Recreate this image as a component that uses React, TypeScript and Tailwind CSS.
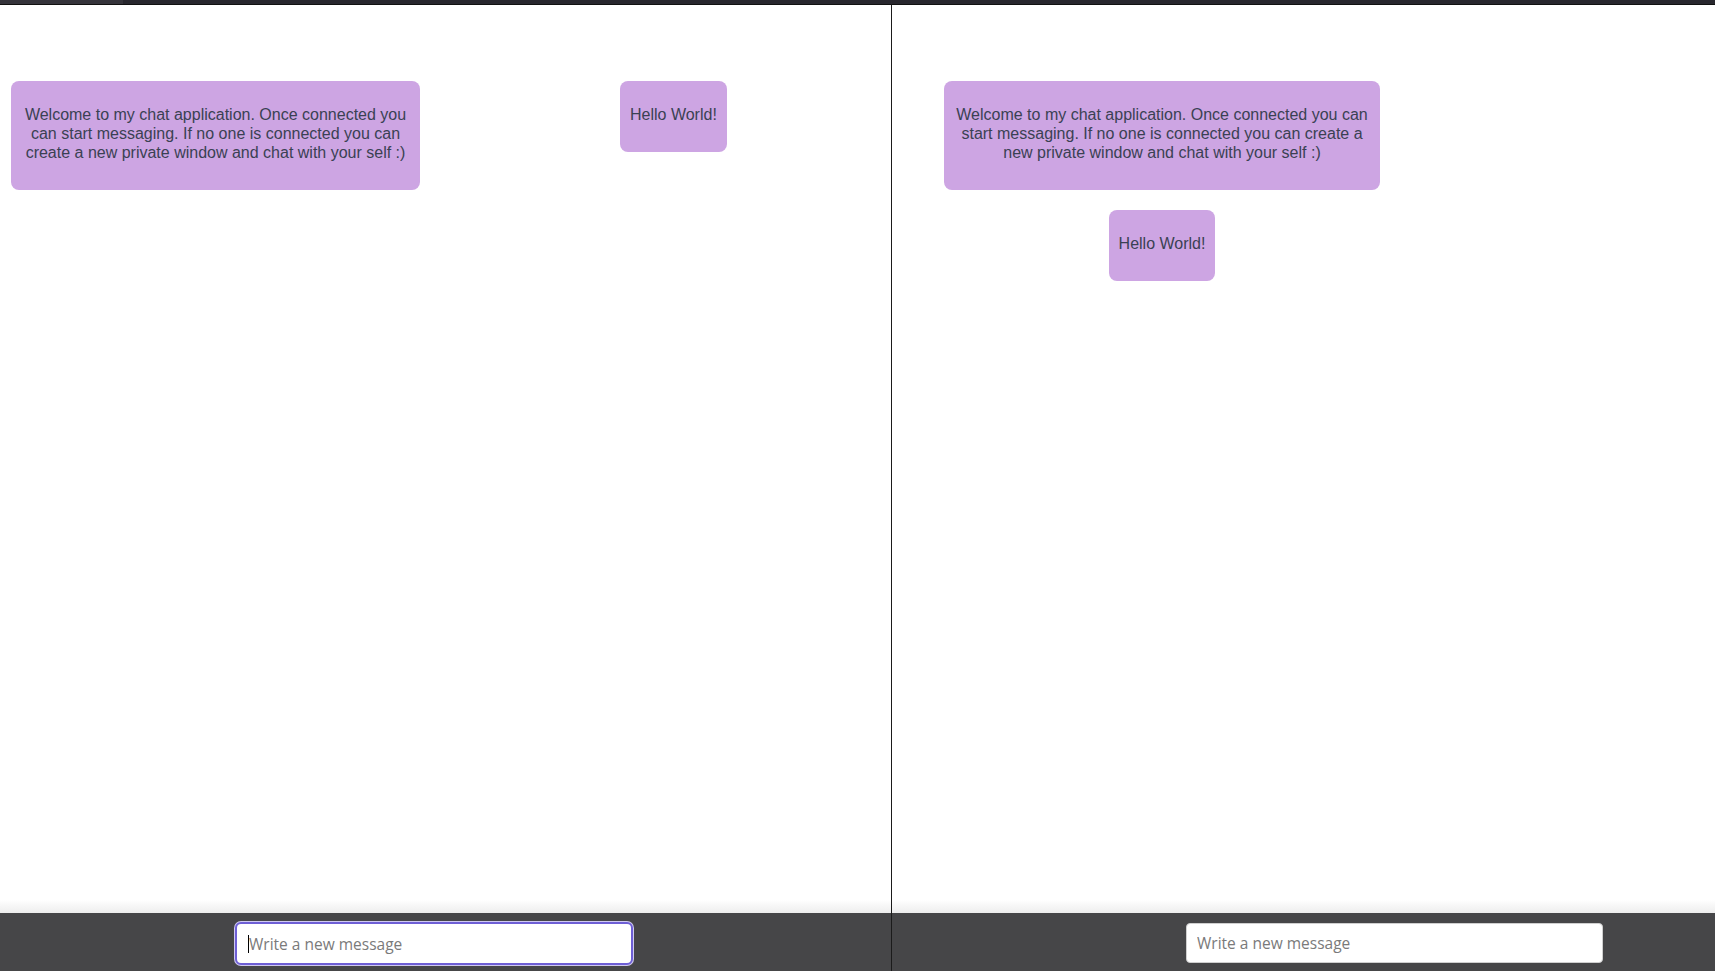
// ** React
import React from "react";

type TBubble = {
    text: string
    className?: string
}

const Bubble = ({text, className}: TBubble) => {
    return (
        <div
            className={`bg-[#cda5e3] text-[#3a4153] rounded-[8px] pt-[24px] pb-[28px] text-center text-[16px] leading-[19px] ${className ?? ''}`}
            style={{fontFamily: '"Liberation Sans", Arial, sans-serif'}}
        >
            {text}
        </div>
    )
}

type TFooter = {
    focused?: boolean
    offset: string
}

const Footer = ({focused, offset}: TFooter) => {
    return (
        <div className="flex flex-col">
            {/* Soft shade above the bar */}
            <div className="h-[13px] bg-gradient-to-b from-white to-[#ededed]"/>
            <div className={`h-[58px] bg-[#464648] flex items-start ${offset}`}>
                {focused ? (
                    <div className="relative mt-[9px]">
                        <input
                            readOnly
                            placeholder="Write a new message"
                            className="w-[398px] h-[43px] bg-white rounded-[6px] border-2 border-[#6e5fd5] shadow-[0_0_0_1px_#cfc9f0] pl-[12px] text-[15.5px] text-[#555] placeholder:text-[#7a7a7a] outline-none"
                            style={{fontFamily: '"Open Sans", "Noto Sans", sans-serif'}}
                        />
                        {/* Caret */}
                        <span className="absolute left-[13px] top-[13px] w-px h-[18px] bg-black"/>
                    </div>
                ) : (
                    <input
                        readOnly
                        placeholder="Write a new message"
                        className="mt-[10px] w-[417px] h-[40px] bg-white rounded-[4px] border border-[#cfcfcf] pl-[10px] text-[15.5px] text-[#555] placeholder:text-[#7a7a7a] outline-none"
                        style={{fontFamily: '"Open Sans", "Noto Sans", sans-serif'}}
                    />
                )}
            </div>
        </div>
    )
}

const WELCOME = 'Welcome to my chat application. Once connected you can start messaging. If no one is connected you can create a new private window and chat with your self :)'

const App = () => {
    return (
        <div className="w-[1715px] h-[971px] flex flex-col bg-white overflow-hidden">
            {/* Top bar */}
            <div className="h-[5px] flex border-b border-[#111]">
                <div className="w-[123px] bg-[#35343b]"/>
                <div className="flex-1 bg-[#28272e]"/>
            </div>

            <div className="flex-1 flex">
                {/* Left window */}
                <div className="w-[891px] flex flex-col">
                    <div className="flex-1 flex items-start pt-[76px] pl-[11px]">
                        <Bubble text={WELCOME} className="w-[409px] px-[11px]"/>
                        <Bubble text="Hello World!" className="ml-[200px] px-[10px] whitespace-nowrap"/>
                    </div>
                    <Footer focused offset="pl-[235px]"/>
                </div>

                {/* Divider */}
                <div className="w-px bg-[#1b1b1b]"/>

                {/* Right window */}
                <div className="flex-1 flex flex-col">
                    <div className="flex-1 pt-[76px] pl-[52px]">
                        <div className="w-[436px] flex flex-col items-center gap-[20px]">
                            <Bubble text={WELCOME} className="w-[436px] px-[11px]"/>
                            <Bubble text="Hello World!" className="px-[10px] whitespace-nowrap"/>
                        </div>
                    </div>
                    <Footer offset="pl-[294px]"/>
                </div>
            </div>
        </div>
    )
}

export default App
